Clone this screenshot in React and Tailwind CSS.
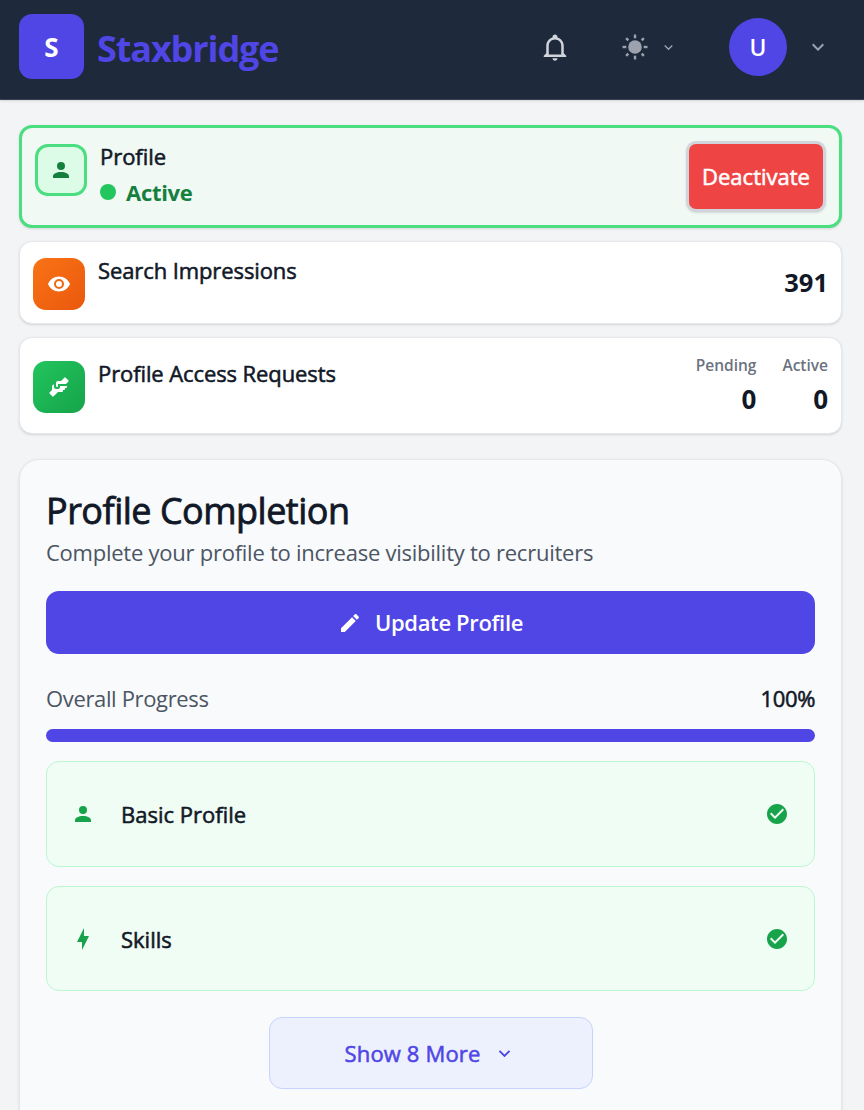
import clsx from 'clsx';

const paths = {
  account:
    'M12,4A4,4 0 0,1 16,8A4,4 0 0,1 12,12A4,4 0 0,1 8,8A4,4 0 0,1 12,4M12,14C16.42,14 20,15.79 20,18V20H4V18C4,15.79 7.58,14 12,14Z',
  bell:
    'M10 21H14C14 22.1 13.1 23 12 23S10 22.1 10 21M21 19V20H3V19L5 17V11C5 7.9 7 5.2 10 4.3V4C10 2.9 10.9 2 12 2S14 2.9 14 4V4.3C17 5.2 19 7.9 19 11V17L21 19M17 11C17 8.2 14.8 6 12 6S7 8.2 7 11V18H17V11Z',
  bolt: 'M11 15H6L13 1V9H18L11 23V15Z',
  check:
    'M12 2C6.5 2 2 6.5 2 12S6.5 22 12 22 22 17.5 22 12 17.5 2 12 2M10 17L5 12L6.41 10.59L10 14.17L17.59 6.58L19 8L10 17Z',
  chevron: 'M7.41,8.58L12,13.17L16.59,8.58L18,10L12,16L6,10L7.41,8.58Z',
  eye:
    'M12,9A3,3 0 0,0 9,12A3,3 0 0,0 12,15A3,3 0 0,0 15,12A3,3 0 0,0 12,9M12,17A5,5 0 0,1 7,12A5,5 0 0,1 12,7A5,5 0 0,1 17,12A5,5 0 0,1 12,17M12,4.5C7,4.5 2.73,7.61 1,12C2.73,16.39 7,19.5 12,19.5C17,19.5 21.27,16.39 23,12C21.27,7.61 17,4.5 12,4.5Z',
  handshake:
    'M11 6H14L17.29 2.7A1 1 0 0 1 18.71 2.7L21.29 5.29A1 1 0 0 1 21.29 6.7L19 9H11V11A1 1 0 0 1 10 12A1 1 0 0 1 9 11V8A2 2 0 0 1 11 6M5 11V15L2.71 17.29A1 1 0 0 0 2.71 18.71L5.29 21.29A1 1 0 0 0 6.71 21.29L11 17H15A1 1 0 0 0 16 16V15H17A1 1 0 0 0 18 14V13H19A1 1 0 0 0 20 12V11H13V12A2 2 0 0 1 11 14H9A2 2 0 0 1 7 12V9L5 11Z',
  pencil:
    'M20.71,7.04C21.1,6.65 21.1,6 20.71,5.63L18.37,3.29C18,2.9 17.35,2.9 16.96,3.29L15.12,5.12L18.87,8.87M3,17.25V21H6.75L17.81,9.93L14.06,6.18L3,17.25Z',
};

const Icon = ({ name, className = 'w-6 h-6' }) => (
  <svg className={clsx('shrink-0', className)} fill="currentColor" viewBox="0 0 24 24">
    <path d={paths[name]} />
  </svg>
);

const SunIcon = () => (
  <svg className="w-[26px] h-[26px] shrink-0" viewBox="0 0 26 26" fill="none" stroke="currentColor" strokeWidth={2.4}>
    <circle cx="13" cy="13" r="6.8" fill="currentColor" stroke="none" />
    {[0, 45, 90, 135, 180, 225, 270, 315].map((angle) => (
      <path key={angle} d={angle % 90 ? 'M13 3.5v-3' : 'M13 4.3v-3.8'} transform={`rotate(${angle} 13 13)`} />
    ))}
  </svg>
);

// Open Sans has no medium weight, a thin stroke sits between regular and semibold
const medium = '[-webkit-text-stroke:0.55px]';

const Header = () => (
  <header className="flex items-start h-[100px] bg-[#1e293b] border-b border-[#374151] pl-[19px] shadow-sm">
    <div className="flex items-center justify-center w-[65px] h-[65px] pt-0.5 mt-3.5 rounded-[13px] bg-[#4f46e5] text-white text-[26px] font-bold">
      S
    </div>
    <h1 className="ml-[13px] mt-[22px] text-[36px] leading-[54px] font-bold text-[#4f46e5] tracking-[-1.1px]">
      Staxbridge
    </h1>
    <div className="flex items-center ml-auto mt-[18px] h-[58px] pr-[34px] text-[#9ca3af]">
      <Icon name="bell" className="w-[30px] h-[30px] text-[#d1d5db]" />
      <div className="flex items-center ml-[52px]">
        <SunIcon />
        <Icon name="chevron" className="w-[17px] h-[17px] ml-3" />
      </div>
      <div className="flex items-center justify-center w-[58px] h-[58px] pt-0.5 ml-[52px] rounded-full bg-[#4f46e5] text-white text-[22.75px] font-semibold">
        U
      </div>
      <Icon name="chevron" className="w-6 h-6 ml-[19px]" />
    </div>
  </header>
);

const StatCard = ({ icon, title, iconClass, className, children }) => (
  <section
    className={clsx(
      'flex items-center justify-between bg-white border border-gray-200 rounded-[13px] shadow-sm px-[13px]',
      className
    )}
  >
    <div className="flex items-center pt-0.5">
      <div
        className={clsx(
          'flex items-center justify-center w-[52px] h-[52px] rounded-[13px] bg-linear-to-br text-white',
          iconClass
        )}
      >
        <Icon name={icon} />
      </div>
      <h3 className={clsx('ml-[13px] h-[52px] text-[22px] leading-6 tracking-[-0.1px]', medium)}>{title}</h3>
    </div>
    {children}
  </section>
);

const Count = ({ label, value }) => (
  <div className="text-right pt-[3px]">
    <p className="text-[15.5px] leading-5 font-semibold text-[#6b7280]">{label}</p>
    <p className="mt-1 text-[26px] leading-10 font-bold">{value}</p>
  </div>
);

const steps = [
  { icon: 'account', label: 'Basic Profile', className: 'h-[106px]' },
  { icon: 'bolt', label: 'Skills', className: 'h-[105px] mt-[19px] pt-px' },
];

const App = () => {
  return (
    <div className="h-[1110px] overflow-hidden bg-gray-100 text-[#111827] font-['Open_Sans','Noto_Sans',sans-serif]">
      <Header />
      <main className="pl-[19px] pr-[22px] pt-[25px]">
        <section className="flex justify-between h-[103px] px-[13px] pt-[13px] bg-[#f0f9f4] border-3 border-[#4ade80] rounded-[13px] shadow-sm">
          <div className="flex">
            <div className="flex items-center justify-center w-[52px] h-[52px] mt-[3px] rounded-[13px] border-3 border-[#4ade80] bg-[#dcfce7] text-[#15803d]">
              <Icon name="account" />
            </div>
            <div className="ml-[13px] -mt-px">
              <h3 className={clsx('text-[22px] leading-8 tracking-[-0.05px]', medium)}>Profile</h3>
              <div className="flex items-center h-10 text-[#15803d]">
                <span className="w-4 h-4 rounded-full bg-[#22c55e]"></span>
                <span className="ml-2.5 text-[22px] font-bold tracking-[-0.3px]">Active</span>
              </div>
            </div>
          </div>
          <button
            className={clsx(
              'w-[140px] h-[71px] rounded-[10px] border-3 border-[#d1d5db] bg-[#ef4444] text-white text-[22px] shadow-sm',
              medium
            )}
          >
            Deactivate
          </button>
        </section>

        <StatCard
          icon="eye"
          title="Search Impressions"
          iconClass="from-[#f97316] to-[#ea580c]"
          className="h-[83px] mt-[13px]"
        >
          <p className="text-[25.5px] font-bold">391</p>
        </StatCard>

        <StatCard
          icon="handshake"
          title="Profile Access Requests"
          iconClass="from-[#22c55e] to-[#16a34a]"
          className="h-[97px] mt-[13px]"
        >
          <div className="flex gap-[26px]">
            <Count label="Pending" value={0} />
            <Count label="Active" value={0} />
          </div>
        </StatCard>

        <section className="h-[700px] mt-[25px] px-[26px] pt-[26px] rounded-[20px] border border-gray-200 bg-[#f9fafc] shadow-sm">
          <h2 className="text-[36px] leading-[49px] tracking-[-0.5px] [-webkit-text-stroke:0.8px]">
            Profile Completion
          </h2>
          <p className="mt-px text-[22px] leading-8 text-[#4b5563] tracking-[-0.25px]">
            Complete your profile to increase visibility to recruiters
          </p>
          <button className="flex items-center justify-center w-full h-[63px] mt-[23px] rounded-[13px] bg-[#4f46e5] text-white text-[22px] font-semibold tracking-[-0.35px]">
            <Icon name="pencil" className="w-6 h-6 mr-[13px]" />
            Update Profile
          </button>

          <div className="flex justify-between mt-7 text-[22px] leading-8 tracking-[-0.35px]">
            <span className="text-[#4b5563]">Overall Progress</span>
            <span className={medium}>100%</span>
          </div>
          <div className="mt-[15px] h-[13px] rounded-full bg-[#4f46e5]"></div>

          <div className="mt-[19px]">
            {steps.map((step) => (
              <div
                key={step.label}
                className={clsx(
                  'flex items-center pl-6 pr-[25px] rounded-[13px] border border-[#bbf7d0] bg-[#f0fdf4] text-[#16a34a]',
                  step.className
                )}
              >
                <Icon name={step.icon} />
                <span className={clsx('ml-[26px] text-[22px] text-[#111827]', medium)}>{step.label}</span>
                <Icon name="check" className="w-6 h-6 ml-auto" />
              </div>
            ))}
          </div>

          <button
            className={clsx(
              'flex items-center justify-center w-[324px] h-[72px] mx-auto mt-[26px] rounded-[13px] border border-[#c7d2fe] bg-[#edf1fe] text-[#4f46e5] text-[22px] tracking-[0.15px]',
              medium
            )}
          >
            Show 8 More
            <Icon name="chevron" className="w-[23px] h-[23px] ml-[13px]" />
          </button>
        </section>
      </main>
    </div>
  );
};

export default App;
